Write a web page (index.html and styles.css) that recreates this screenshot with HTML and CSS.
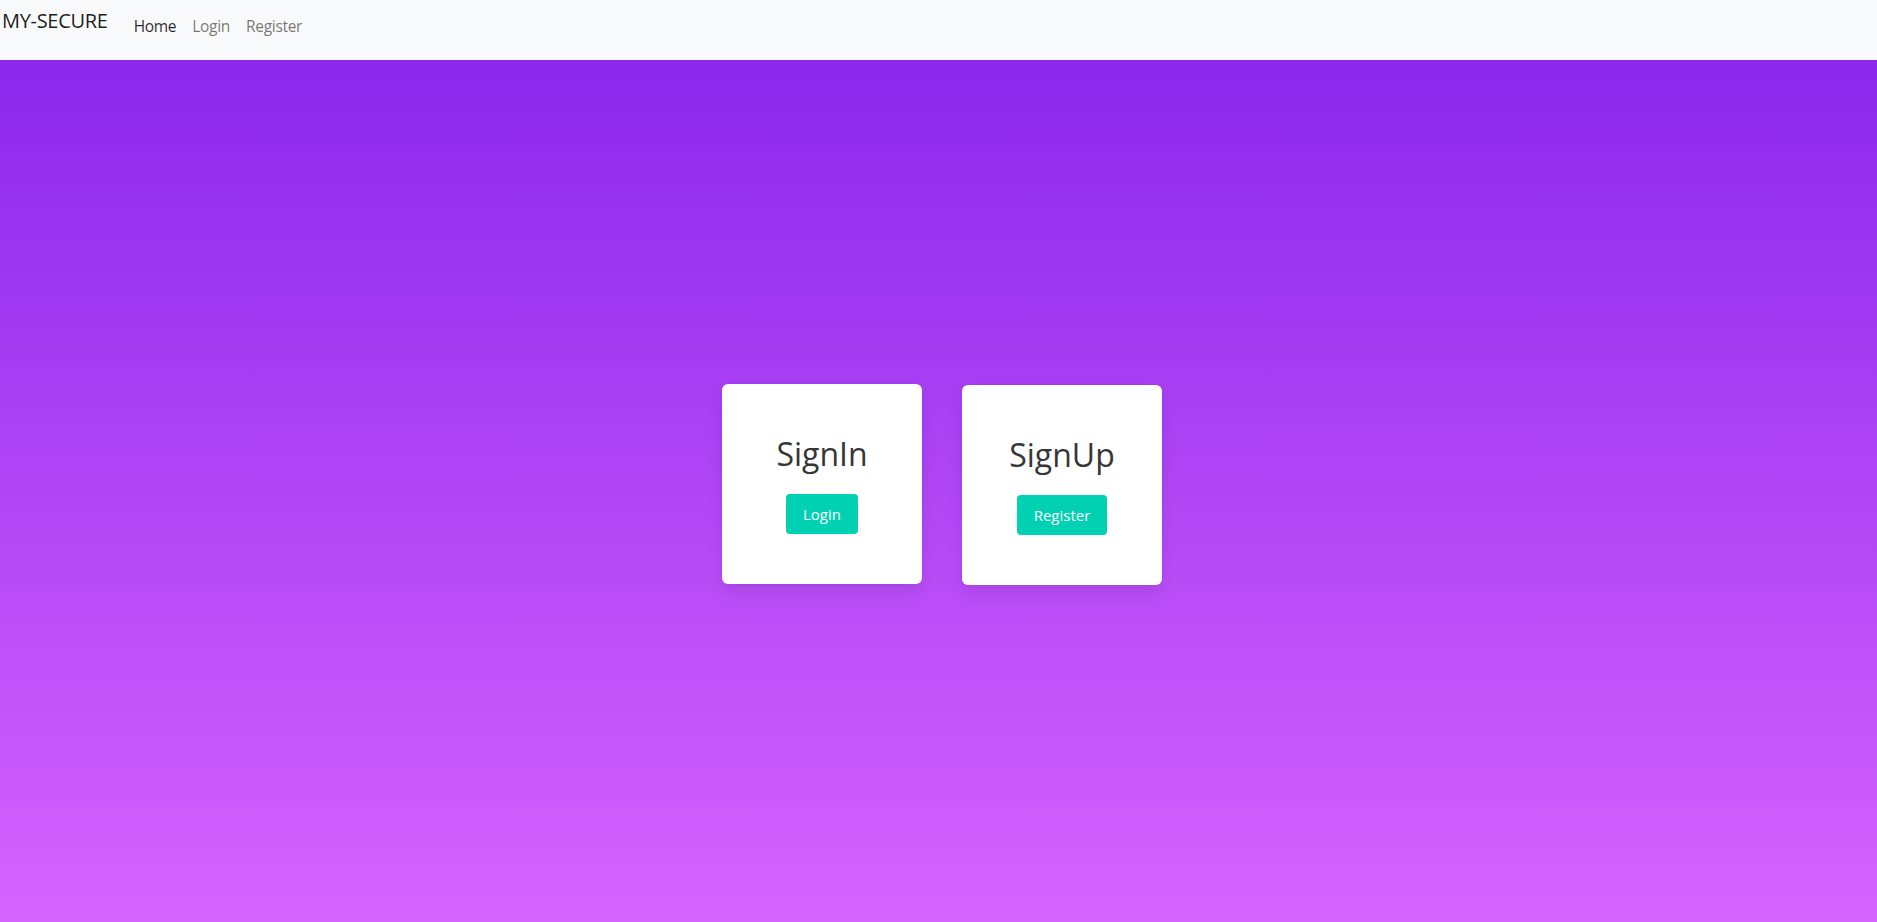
FILE: index.html
```html
<!DOCTYPE html>
<html lang="en">
<head>
<meta charset="utf-8">
<title>MY-SECURE</title>
<link rel="stylesheet" href="styles.css">
</head>
<body>
  <nav class="navbar">
    <a class="brand" href="#">MY-SECURE</a>
    <ul class="nav">
      <li><a class="nav-link active" href="#">Home</a></li>
      <li><a class="nav-link" href="#">Login</a></li>
      <li><a class="nav-link" href="#">Register</a></li>
    </ul>
  </nav>
  <main class="hero">
    <div class="cards">
      <div class="box">
        <h3 class="title">SignIn</h3>
        <a class="button" href="#">Login</a>
      </div>
      <div class="box box-second">
        <h3 class="title">SignUp</h3>
        <a class="button" href="#">Register</a>
      </div>
    </div>
  </main>
</body>
</html>
```

FILE: styles.css
```css
* { box-sizing: border-box; }
html, body { margin: 0; padding: 0; height: 100%; }
body {
  font-family: "Open Sans", "Noto Sans", sans-serif;
  font-size: 16px;
  display: flex;
  flex-direction: column;
  overflow: hidden;
}
a { text-decoration: none; }

.navbar {
  height: 60px;
  flex: none;
  background: #f8f9fa;
  display: flex;
  align-items: flex-start;
  padding-left: 2px;
}
.brand {
  font-size: 20px;
  line-height: 24px;
  padding-top: 9px;
  color: rgba(0,0,0,.9);
  margin-right: 18px;
  letter-spacing: -0.3px;
}
.nav {
  list-style: none;
  margin: 0;
  padding: 0;
  display: flex;
  padding-top: 14px;
}
.nav-link {
  display: block;
  padding: 0 8px;
  font-size: 15.5px;
  line-height: 24px;
  letter-spacing: -0.3px;
  color: rgba(0,0,0,.55);
}
.nav-link.active { color: rgba(0,0,0,.85); }

.hero {
  flex: 1;
  background: linear-gradient(to bottom, #8b28ec 0%, #d563fe 100%);
  display: flex;
  align-items: center;
  justify-content: center;
  padding-bottom: 14px;
  padding-left: 7px;
}
.cards {
  display: flex;
  gap: 40px;
  align-items: flex-start;
}
.box {
  width: 200px;
  height: 200px;
  background: #fff;
  border-radius: 6px;
  box-shadow: 0 8px 16px -2px rgba(10,10,10,.1), 0 0 0 1px rgba(10,10,10,.02);
  display: flex;
  flex-direction: column;
  align-items: center;
  justify-content: center;
}
.box-second { margin-top: 1px; }
.title {
  margin: 2px 0 22px;
  font-size: 32px;
  font-weight: 500;
  line-height: 36px;
  color: #363636;
}
.button {
  display: inline-flex;
  align-items: center;
  height: 40px;
  padding: 0 17px;
  background: #00d1b2;
  color: #fff;
  border-radius: 4px;
  font-size: 15px;
}
```
